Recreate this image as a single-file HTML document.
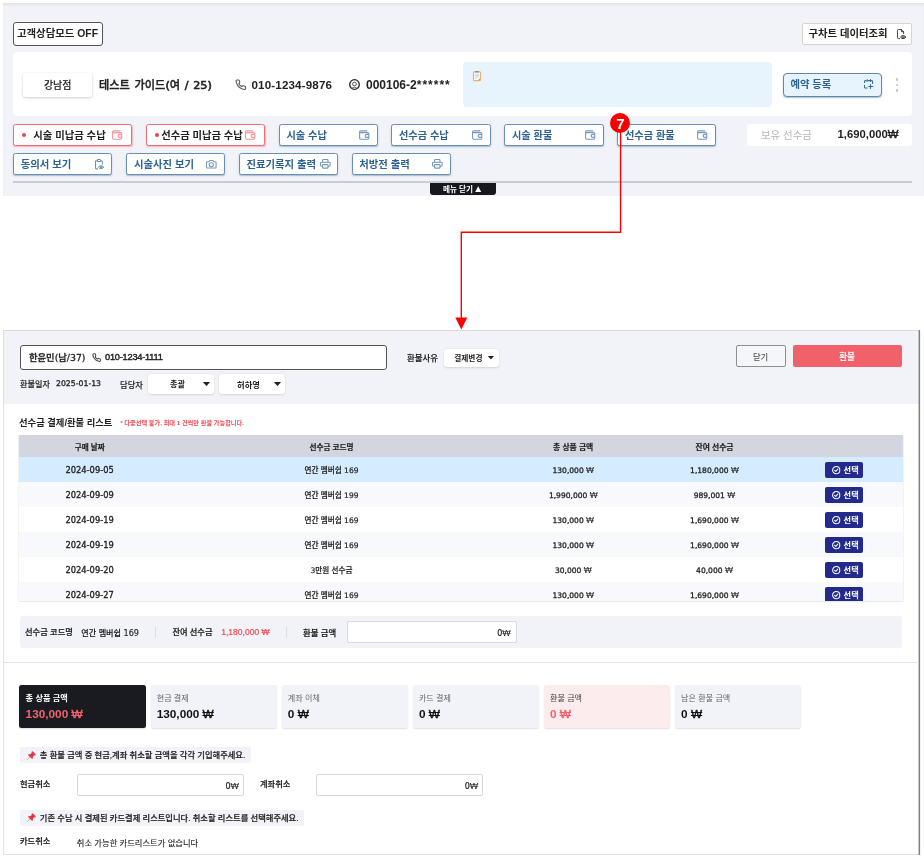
<!DOCTYPE html>
<html lang="ko">
<head>
<meta charset="utf-8">
<title>선수금 환불</title>
<style>
*{box-sizing:border-box;margin:0;padding:0}
html,body{width:924px;height:860px;background:#fff;overflow:hidden}
body{position:relative;font-family:"Liberation Sans","Noto Sans CJK KR",sans-serif;color:#222;font-size:11px;line-height:1}
#page{position:absolute;left:0;top:0;width:924px;height:860px;overflow:hidden;will-change:transform}
.a{position:absolute}
.w{font-family:"Liberation Sans",sans-serif;font-size:1.12em;-webkit-text-stroke:0.05px}
.t{position:absolute;white-space:nowrap;line-height:1;transform:translateY(-50%)}
svg{position:absolute;overflow:visible}
.bb{position:absolute;border-radius:2.5px;background:#fff;border:1px solid #6a90b5;box-shadow:0 1px 1.5px rgba(70,110,150,.45)}
.br{position:absolute;border-radius:2.5px;background:#fff;border:1px solid #ef6f78;box-shadow:0.5px 1px 1.5px rgba(235,100,110,.45)}
.dd{position:absolute;background:#fff;border-radius:3px;box-shadow:0 0.5px 2px rgba(0,0,0,.13)}
.inp{position:absolute;background:#fff;border:1px solid #d9d9d9;border-radius:2px}
.sel{position:absolute;width:38.5px;height:16px;border-radius:2px;background:#232a8c}
.card{position:absolute;width:126.5px;height:43.5px;border-radius:2.5px;background:#f2f3f8;box-shadow:0 1px 1.5px rgba(0,0,0,.12)}
</style>
</head>
<body>
<div id="page">
<div class="a" style="left:3px;top:3px;width:921px;height:192.5px;background:#f2f3f8;box-shadow:inset 0 3px 3px -1px rgba(0,0,0,.07)"></div>
<div class="a" style="left:13px;top:22px;width:89.5px;height:23.5px;border:1px solid #555;border-radius:3px;background:#fff"></div>
<span class="t" style="top:34.4px;font-size:10.4px;color:#222;font-weight:700;left:17px;">고객상담모드 OFF</span>
<div class="a" style="left:802px;top:23px;width:110px;height:21.5px;border:1px solid #d4d4d4;border-radius:2px;background:#fff"></div>
<span class="t" style="top:34.3px;font-size:10.35px;color:#222;font-weight:700;left:808.5px;">구차트 데이터조회</span>
<svg style="left:896.5px;top:29px" width="9" height="10.5" viewBox="0 0 9 10.5" fill="none" stroke="#333" stroke-width="0.9" stroke-linecap="round" stroke-linejoin="round"><path d="M2.6 9.6H1.4A0.9 0.9 0 0 1 0.5 8.7V1.4A0.9 0.9 0 0 1 1.4 0.5H4.4L6.6 2.7V4.6"/><path d="M4.4 0.5V2.7H6.6"/><ellipse cx="6.1" cy="8.1" rx="2.3" ry="1.5" stroke-width="1"/><circle cx="6.1" cy="8.1" r="0.85" fill="#333" stroke="none"/></svg>
<div class="a" style="left:13px;top:52px;width:899px;height:63.5px;background:#fff;border-radius:4px"></div>
<div class="a" style="left:23px;top:73px;width:69px;height:23.5px;background:#fff;border-radius:3px;box-shadow:0 1px 3px rgba(0,0,0,.2)"></div>
<span class="t" style="top:85.8px;font-size:10px;color:#222;font-weight:500;-webkit-text-stroke:0.12px #222;left:-42.3px;width:200px;text-align:center;">강남점</span>
<span class="t" style="top:85.6px;font-size:11.2px;color:#222;font-weight:500;font-family:'DejaVu Sans','Noto Sans CJK KR',sans-serif;-webkit-text-stroke:0.36px #222;left:99px;word-spacing:1.1px;">테스트 가이드<span style="-webkit-text-stroke:0.6px #222">(</span>여<span style="-webkit-text-stroke:0.6px #222"> / 25)</span></span>
<svg style="left:234.6px;top:78.8px" width="11.5" height="11.5" viewBox="0 0 24 24" fill="none" stroke="#5e5e5e" stroke-width="2.4" stroke-linecap="round" stroke-linejoin="round"><path d="M22 16.92v3a2 2 0 0 1-2.18 2 19.79 19.79 0 0 1-8.63-3.07 19.5 19.5 0 0 1-6-6 19.79 19.79 0 0 1-3.07-8.67A2 2 0 0 1 4.11 2h3a2 2 0 0 1 2 1.72 12.84 12.84 0 0 0 .7 2.81 2 2 0 0 1-.45 2.11L8.09 9.91a16 16 0 0 0 6 6l1.27-1.27a2 2 0 0 1 2.11-.45 12.84 12.84 0 0 0 2.81.7A2 2 0 0 1 22 16.92z" transform="translate(0,0)"/></svg>
<span class="t" style="top:84.9px;font-size:11.6px;color:#222;font-weight:700;letter-spacing:0.15px;left:251.5px;">010-1234-9876</span>
<svg style="left:348.9px;top:79px" width="11" height="11" viewBox="0 0 11 11" fill="none" stroke="#222" stroke-width="1.3"><circle cx="5.5" cy="5.5" r="4.8"/><circle cx="5.5" cy="5" r="1.9" stroke="#555" stroke-width="1"/><path d="M3.2 9Q5.5 7.4 7.8 9" stroke="#555" stroke-width="0.9"/></svg>
<span class="t" style="top:84.7px;font-size:12px;color:#222;font-weight:700;left:366px;">000106-2<span style="letter-spacing:1px">******</span></span>
<div class="a" style="left:462.5px;top:62px;width:309.5px;height:44.5px;background:#e7f4fd;border-radius:4px"></div>
<svg style="left:473px;top:70.8px" width="8" height="10.2" viewBox="0 0 8 10.2"><rect x="0.3" y="0.6" width="7.4" height="9.3" rx="1" fill="#efaa62" stroke="#e39a4c" stroke-width="0.4"/><rect x="1.1" y="1.4" width="5.8" height="7.7" fill="#fdfdff"/><rect x="2.3" y="0.1" width="3.4" height="1.5" rx="0.4" fill="#8a8a8a"/><path d="M1.9 3.3H6.1M1.9 4.6H6.1M1.9 5.9H6.1M1.9 7.2H4.6" stroke="#b4b4c0" stroke-width="0.55"/><path d="M6.9 7.3V9.1H5.1Z" fill="#e58a2c"/></svg>
<div class="a" style="left:783px;top:73px;width:98.5px;height:23.5px;background:#e7f4fd;border:1px solid #5f88ae;border-radius:4px;box-shadow:0 1px 1.5px rgba(70,110,150,.45)"></div>
<span class="t" style="top:84.7px;font-size:10.3px;color:#2c6291;font-weight:700;left:790.5px;">예약 등록</span>
<svg style="left:863.8px;top:79.2px" width="9.4" height="10" viewBox="0 0 9.4 10" fill="none" stroke="#356a9a" stroke-width="1.05" stroke-linecap="round"><path d="M2.2 1.6H1.4A0.9 0.9 0 0 0 0.5 2.5V3.4M0.5 6.2V8.2A0.9 0.9 0 0 0 1.4 9.1H3.2M4 1.6H5.6M7.4 1.6H7.7A0.9 0.9 0 0 1 8.6 2.5V4.4"/><path d="M3.1 0.5V2.4M6.5 0.5V2.4"/><path d="M6.6 5.6V9.4M4.7 7.5H8.9"/></svg>
<div class="a" style="left:895.7px;top:77.89999999999999px;width:2.8px;height:2.8px;border-radius:50%;background:#c2c2c2"></div>
<div class="a" style="left:895.7px;top:83.5px;width:2.8px;height:2.8px;border-radius:50%;background:#c2c2c2"></div>
<div class="a" style="left:895.7px;top:89.0px;width:2.8px;height:2.8px;border-radius:50%;background:#c2c2c2"></div>
<div class="br" style="left:13px;top:124px;width:119px;height:21.5px"></div>
<div class="a" style="left:22.2px;top:132.9px;width:4.2px;height:4.2px;border-radius:50%;background:#e8434f"></div>
<span class="t" style="top:135.5px;font-size:10.36px;color:#222;font-weight:700;left:33.2px;">시술 미납금 수납</span>
<svg style="left:112px;top:130.1px" width="10.5" height="9.8" viewBox="0 0 10.5 9.8" fill="none" stroke="#f4979f" stroke-width="1.1" stroke-linejoin="round"><path d="M8.3 0.9H1.7A1.1 1.1 0 0 0 0.6 2V8.1A1.1 1.1 0 0 0 1.7 9.2H8.7A1.1 1.1 0 0 0 9.8 8.1V3.6A1.1 1.1 0 0 0 8.7 2.6H0.8"/><path d="M9.9 4.4H7.7A1.5 1.5 0 0 0 7.7 7.4H9.9" stroke-width="1.2"/></svg>
<div class="br" style="left:146px;top:124px;width:119px;height:21.5px"></div>
<div class="a" style="left:155.1px;top:132.9px;width:4.2px;height:4.2px;border-radius:50%;background:#e8434f"></div>
<span class="t" style="top:135.5px;font-size:10.32px;color:#222;font-weight:700;left:161.2px;">선수금 미납금 수납</span>
<svg style="left:244.6px;top:130.1px" width="10.5" height="9.8" viewBox="0 0 10.5 9.8" fill="none" stroke="#f4979f" stroke-width="1.1" stroke-linejoin="round"><path d="M8.3 0.9H1.7A1.1 1.1 0 0 0 0.6 2V8.1A1.1 1.1 0 0 0 1.7 9.2H8.7A1.1 1.1 0 0 0 9.8 8.1V3.6A1.1 1.1 0 0 0 8.7 2.6H0.8"/><path d="M9.9 4.4H7.7A1.5 1.5 0 0 0 7.7 7.4H9.9" stroke-width="1.2"/></svg>
<div class="bb" style="left:278.5px;top:124px;width:99px;height:21.5px"></div>
<span class="t" style="top:135.5px;font-size:10.2px;color:#2c6291;font-weight:700;left:286.5px;">시술 수납</span>
<svg style="left:359px;top:130.1px" width="10.5" height="9.8" viewBox="0 0 10.5 9.8" fill="none" stroke="#7699bc" stroke-width="1.1" stroke-linejoin="round"><path d="M8.3 0.9H1.7A1.1 1.1 0 0 0 0.6 2V8.1A1.1 1.1 0 0 0 1.7 9.2H8.7A1.1 1.1 0 0 0 9.8 8.1V3.6A1.1 1.1 0 0 0 8.7 2.6H0.8"/><path d="M9.9 4.4H7.7A1.5 1.5 0 0 0 7.7 7.4H9.9" stroke-width="1.2"/></svg>
<div class="bb" style="left:391px;top:124px;width:100px;height:21.5px"></div>
<span class="t" style="top:135.5px;font-size:10.2px;color:#2c6291;font-weight:700;left:399px;">선수금 수납</span>
<svg style="left:472px;top:130.1px" width="10.5" height="9.8" viewBox="0 0 10.5 9.8" fill="none" stroke="#7699bc" stroke-width="1.1" stroke-linejoin="round"><path d="M8.3 0.9H1.7A1.1 1.1 0 0 0 0.6 2V8.1A1.1 1.1 0 0 0 1.7 9.2H8.7A1.1 1.1 0 0 0 9.8 8.1V3.6A1.1 1.1 0 0 0 8.7 2.6H0.8"/><path d="M9.9 4.4H7.7A1.5 1.5 0 0 0 7.7 7.4H9.9" stroke-width="1.2"/></svg>
<div class="bb" style="left:504px;top:124px;width:100px;height:21.5px"></div>
<span class="t" style="top:135.5px;font-size:10.2px;color:#2c6291;font-weight:700;left:512px;">시술 환불</span>
<svg style="left:584.7px;top:130.1px" width="10.5" height="9.8" viewBox="0 0 10.5 9.8" fill="none" stroke="#7699bc" stroke-width="1.1" stroke-linejoin="round"><path d="M8.3 0.9H1.7A1.1 1.1 0 0 0 0.6 2V8.1A1.1 1.1 0 0 0 1.7 9.2H8.7A1.1 1.1 0 0 0 9.8 8.1V3.6A1.1 1.1 0 0 0 8.7 2.6H0.8"/><path d="M9.9 4.4H7.7A1.5 1.5 0 0 0 7.7 7.4H9.9" stroke-width="1.2"/></svg>
<div class="bb" style="left:617px;top:124px;width:99px;height:21.5px"></div>
<span class="t" style="top:135.5px;font-size:10.2px;color:#2c6291;font-weight:700;left:625px;">선수금 환불</span>
<svg style="left:697px;top:130.1px" width="10.5" height="9.8" viewBox="0 0 10.5 9.8" fill="none" stroke="#7699bc" stroke-width="1.1" stroke-linejoin="round"><path d="M8.3 0.9H1.7A1.1 1.1 0 0 0 0.6 2V8.1A1.1 1.1 0 0 0 1.7 9.2H8.7A1.1 1.1 0 0 0 9.8 8.1V3.6A1.1 1.1 0 0 0 8.7 2.6H0.8"/><path d="M9.9 4.4H7.7A1.5 1.5 0 0 0 7.7 7.4H9.9" stroke-width="1.2"/></svg>
<div class="a" style="left:747px;top:124px;width:165px;height:21.5px;background:#fff;border-radius:3px"></div>
<span class="t" style="top:135.9px;font-size:10.45px;color:#b6b6b6;font-weight:400;left:761px;">보유 선수금</span>
<span class="t" style="top:135.4px;font-size:11.3px;color:#222;font-weight:700;left:837.5px;">1,690,000<span style="font-weight:400;-webkit-text-stroke:0.4px">&#8361;</span></span>
<div class="bb" style="left:13px;top:152.5px;width:99px;height:22px"></div>
<span class="t" style="top:164.5px;font-size:10.37px;color:#2c6291;font-weight:700;left:20.7px;">동의서 보기</span>
<div class="bb" style="left:126px;top:152.5px;width:99px;height:22px"></div>
<span class="t" style="top:164.5px;font-size:10.37px;color:#2c6291;font-weight:700;left:134px;">시술사진 보기</span>
<div class="bb" style="left:239px;top:152.5px;width:99px;height:22px"></div>
<span class="t" style="top:164.5px;font-size:10.37px;color:#2c6291;font-weight:700;left:246.5px;">진료기록지 출력</span>
<div class="bb" style="left:351.5px;top:152.5px;width:99px;height:22px"></div>
<span class="t" style="top:164.5px;font-size:10.37px;color:#2c6291;font-weight:700;left:359.2px;">처방전 출력</span>
<svg style="left:94.6px;top:158.7px" width="8.6" height="10.6" viewBox="0 0 8.6 10.6" fill="none" stroke="#6a90b5" stroke-width="1.05" stroke-linecap="round" stroke-linejoin="round"><path d="M2.2 1.7H1.4A0.9 0.9 0 0 0 0.5 2.6V9A0.9 0.9 0 0 0 1.4 9.9H2.6M5.6 1.7H6.4A0.9 0.9 0 0 1 7.3 2.6V5"/><rect x="2.3" y="0.5" width="3.2" height="2" rx="0.7"/><ellipse cx="6" cy="8.2" rx="2.3" ry="1.5" stroke-width="1"/><circle cx="6" cy="8.2" r="0.9" fill="#4f7ca6" stroke="none"/></svg>
<svg style="left:206.1px;top:159.6px" width="10.6" height="8.6" viewBox="0 0 10.6 9" preserveAspectRatio="none" fill="none" stroke="#7699bc" stroke-width="1.1" stroke-linejoin="round"><path d="M1.4 1.9H2.9L3.7 0.6H6.9L7.7 1.9H9.2A0.9 0.9 0 0 1 10.1 2.8V7.5A0.9 0.9 0 0 1 9.2 8.4H1.4A0.9 0.9 0 0 1 0.5 7.5V2.8A0.9 0.9 0 0 1 1.4 1.9Z"/><circle cx="5.3" cy="5" r="2.1"/></svg>
<svg style="left:319.6px;top:159.2px" width="10.6" height="9.6" viewBox="0 0 10.6 9.6" fill="none" stroke="#7699bc" stroke-width="1.1" stroke-linejoin="round"><path d="M2.6 3.2V1.3A0.8 0.8 0 0 1 3.4 0.5H7.2A0.8 0.8 0 0 1 8 1.3V3.2"/><path d="M2.6 7.2H1.4A0.9 0.9 0 0 1 0.5 6.3V4.1A0.9 0.9 0 0 1 1.4 3.2H9.2A0.9 0.9 0 0 1 10.1 4.1V6.3A0.9 0.9 0 0 1 9.2 7.2H8"/><rect x="2.6" y="5.6" width="5.4" height="3.5" rx="0.6"/></svg>
<svg style="left:432px;top:159.2px" width="10.6" height="9.6" viewBox="0 0 10.6 9.6" fill="none" stroke="#7699bc" stroke-width="1.1" stroke-linejoin="round"><path d="M2.6 3.2V1.3A0.8 0.8 0 0 1 3.4 0.5H7.2A0.8 0.8 0 0 1 8 1.3V3.2"/><path d="M2.6 7.2H1.4A0.9 0.9 0 0 1 0.5 6.3V4.1A0.9 0.9 0 0 1 1.4 3.2H9.2A0.9 0.9 0 0 1 10.1 4.1V6.3A0.9 0.9 0 0 1 9.2 7.2H8"/><rect x="2.6" y="5.6" width="5.4" height="3.5" rx="0.6"/></svg>
<div class="a" style="left:13px;top:181px;width:899px;height:1.8px;background:#cbccd1"></div>
<div class="a" style="left:430px;top:182.8px;width:66px;height:12.5px;background:#17181d;border-radius:0 0 3px 3px"></div>
<span class="t" style="top:190.2px;font-size:7.6px;color:#fff;font-weight:700;left:443px;">메뉴 닫기<span style="font-size:10px;line-height:0;position:relative;top:-0.3px;margin-left:0.3px">▲</span></span>
<svg style="left:0;top:0" width="924" height="860" viewBox="0 0 924 860"><path d="M620.6 130V232.3H461.3V320" fill="none" stroke="#f00" stroke-width="1.4"/><path d="M455.3 317.5H467.3L461.3 329.5Z" fill="#f00"/></svg>
<div class="a" style="left:610px;top:113px;width:20.4px;height:20.4px;border-radius:50%;background:#f80000"></div>
<span class="t" style="top:123.4px;font-size:15px;color:#fff;font-weight:700;left:520.3px;width:200px;text-align:center;">7</span>
<div class="a" style="left:3px;top:330px;width:917px;height:525px;background:#fff;border:1px solid #e1e1e1;border-top-color:#dadada;border-right:0"></div>
<div class="a" style="left:4px;top:331px;width:915px;height:72.5px;background:#f2f3f8"></div>
<svg style="left:915px;top:328px" width="9" height="530" viewBox="915 328 9 530"><path d="M919.35 330V855" stroke="#7e7e7e" stroke-width="1.5" fill="none"/></svg>
<div class="a" style="left:20px;top:345px;width:367px;height:24.7px;background:#fff;border:1px solid #555;border-radius:3px"></div>
<span class="t" style="top:357.7px;font-size:9.3px;color:#222;font-weight:500;font-family:'DejaVu Sans','Noto Sans CJK KR',sans-serif;-webkit-text-stroke:0.28px #222;left:29px;">한윤민(남/37)</span>
<svg style="left:91.5px;top:353.2px" width="9.2" height="9.2" viewBox="0 0 24 24" fill="none" stroke="#4a4a4a" stroke-width="2.7" stroke-linecap="round" stroke-linejoin="round"><path d="M22 16.92v3a2 2 0 0 1-2.18 2 19.79 19.79 0 0 1-8.63-3.07 19.5 19.5 0 0 1-6-6 19.79 19.79 0 0 1-3.07-8.67A2 2 0 0 1 4.11 2h3a2 2 0 0 1 2 1.72 12.84 12.84 0 0 0 .7 2.81 2 2 0 0 1-.45 2.11L8.09 9.91a16 16 0 0 0 6 6l1.27-1.27a2 2 0 0 1 2.11-.45 12.84 12.84 0 0 0 2.81.7A2 2 0 0 1 22 16.92z"/></svg>
<span class="t" style="top:357.9px;font-size:9.2px;color:#222;font-weight:400;-webkit-text-stroke:0.42px #222;letter-spacing:-0.2px;left:105px;">010-1234-1111</span>
<span class="t" style="top:358px;font-size:8.45px;color:#222;font-weight:500;-webkit-text-stroke:0.15px #222;left:407px;">환불사유</span>
<div class="dd" style="left:443.8px;top:348.6px;width:55.5px;height:18.7px"></div>
<span class="t" style="top:358.5px;font-size:7.7px;color:#222;font-weight:700;left:454.2px;">결제변경</span>
<svg style="left:488.2px;top:356.2px" width="5.8" height="3.2" viewBox="0 0 5.8 3.2"><path d="M0.4 0H5.4Q5.9 0.1 5.6 0.5L3.3 3Q2.9 3.3 2.5 3L0.2 0.5Q-0.1 0.1 0.4 0Z" fill="#222"/></svg>
<div class="a" style="left:735.7px;top:345.2px;width:50.5px;height:22px;background:#f5f6fa;border:1px solid #8f8f8f;border-radius:2px"></div>
<span class="t" style="top:356.6px;font-size:8.3px;color:#555;font-weight:500;left:660.6px;width:200px;text-align:center;">닫기</span>
<div class="a" style="left:792.9px;top:345.2px;width:109px;height:21.7px;background:#f0616a;border-radius:2px"></div>
<span class="t" style="top:356.6px;font-size:8.6px;color:#fff;font-weight:700;left:747.1px;width:200px;text-align:center;">환불</span>
<span class="t" style="top:384.5px;font-size:8.15px;color:#222;font-weight:500;-webkit-text-stroke:0.12px #222;left:20px;">환불일자</span>
<span class="t" style="top:384.4px;font-size:7.75px;color:#222;font-weight:400;font-family:'DejaVu Sans','Noto Sans CJK KR',sans-serif;-webkit-text-stroke:0.32px #222;left:56px;">2025-01-13</span>
<span class="t" style="top:384.5px;font-size:8.3px;color:#222;font-weight:500;-webkit-text-stroke:0.12px #222;left:120px;">담당자</span>
<div class="dd" style="left:147.6px;top:374.3px;width:66.4px;height:19.4px"></div>
<span class="t" style="top:384.8px;font-size:8.1px;color:#222;font-weight:700;left:170px;">총괄</span>
<svg style="left:202.6px;top:381.9px" width="7" height="3.8" viewBox="0 0 5.8 3.2"><path d="M0.4 0H5.4Q5.9 0.1 5.6 0.5L3.3 3Q2.9 3.3 2.5 3L0.2 0.5Q-0.1 0.1 0.4 0Z" fill="#222"/></svg>
<div class="dd" style="left:218.7px;top:374.3px;width:66.6px;height:19.4px"></div>
<span class="t" style="top:384.8px;font-size:8.3px;color:#222;font-weight:700;left:237px;">허하영</span>
<svg style="left:273.6px;top:381.9px" width="7" height="3.8" viewBox="0 0 5.8 3.2"><path d="M0.4 0H5.4Q5.9 0.1 5.6 0.5L3.3 3Q2.9 3.3 2.5 3L0.2 0.5Q-0.1 0.1 0.4 0Z" fill="#222"/></svg>
<span class="t" style="top:424.2px;font-size:9.32px;color:#222;font-weight:700;left:19px;">선수금 결제/환불 리스트</span>
<span class="t" style="top:423.4px;font-size:6.2px;color:#f04a55;font-weight:700;left:120.2px;">* 다중선택 불가, 최대 1 건씩만 환불 가능합니다.</span>
<div class="a" style="left:19px;top:435px;width:884.3px;height:166px;background:#fff;box-shadow:0 0.5px 1.5px rgba(0,0,0,.22);overflow:hidden"></div>
<div class="a" style="left:19px;top:435px;width:884.3px;height:22px;background:#d4d6df"></div>
<span class="t" style="top:447.7px;font-size:7.6px;color:#222;font-weight:700;-webkit-text-stroke:0.15px #222;left:-10.299999999999997px;width:200px;text-align:center;">구매 날짜</span>
<span class="t" style="top:447.7px;font-size:7.6px;color:#222;font-weight:700;-webkit-text-stroke:0.15px #222;left:231.5px;width:200px;text-align:center;">선수금 코드명</span>
<span class="t" style="top:447.7px;font-size:7.8px;color:#222;font-weight:700;-webkit-text-stroke:0.15px #222;left:473.20000000000005px;width:200px;text-align:center;">총 상품 금액</span>
<span class="t" style="top:447.7px;font-size:7.8px;color:#222;font-weight:700;-webkit-text-stroke:0.15px #222;left:614.5px;width:200px;text-align:center;">잔여 선수금</span>
<div class="a" style="left:19px;top:457px;width:884.3px;height:144px;overflow:hidden">
<div class="a" style="left:0;top:0.20px;width:884.3px;height:25.2px;background:#d5ebff">
<span class="t" style="left:-29.4px;width:200px;text-align:center;top:13.0px;font-size:8.3px;color:#222;font-weight:400;font-family:'DejaVu Sans','Noto Sans CJK KR',sans-serif;-webkit-text-stroke:0.3px #222">2024-09-05</span>
<span class="t" style="left:212.5px;width:200px;text-align:center;top:13.4px;font-size:7.57px;color:#222;font-weight:500;font-family:'DejaVu Sans','Noto Sans CJK KR',sans-serif;-webkit-text-stroke:0.18px #222">연간 멤버쉽 169</span>
<span class="t" style="left:454.3px;width:200px;text-align:center;top:12.4px;font-size:7.55px;color:#222;font-weight:400;font-family:'DejaVu Sans','Noto Sans CJK KR',sans-serif;-webkit-text-stroke:0.3px #222">130,000 <span class="w">&#8361;</span></span>
<span class="t" style="left:595.5px;width:200px;text-align:center;top:12.4px;font-size:7.55px;color:#222;font-weight:400;font-family:'DejaVu Sans','Noto Sans CJK KR',sans-serif;-webkit-text-stroke:0.3px #222">1,180,000 <span class="w">&#8361;</span></span>
<div class="sel" style="left:805.8px;top:5px"><svg style="left:6.8px;top:3.8px" width="8.4" height="8.4" viewBox="0 0 8.4 8.4" fill="none" stroke="#fff" stroke-width="1.05" stroke-linecap="round" stroke-linejoin="round"><circle cx="4.2" cy="4.2" r="3.6"/><path d="M2.6 4.3L3.8 5.4L5.8 3.1"/></svg><span class="t" style="left:18.8px;top:9.2px;font-size:8.2px;color:#fff;font-weight:700">선택</span></div>
</div>
<div class="a" style="left:0;top:25.20px;width:884.3px;height:25.2px;background:#f8f9fc">
<span class="t" style="left:-29.4px;width:200px;text-align:center;top:13.0px;font-size:8.3px;color:#222;font-weight:400;font-family:'DejaVu Sans','Noto Sans CJK KR',sans-serif;-webkit-text-stroke:0.3px #222">2024-09-09</span>
<span class="t" style="left:212.5px;width:200px;text-align:center;top:13.4px;font-size:7.57px;color:#222;font-weight:500;font-family:'DejaVu Sans','Noto Sans CJK KR',sans-serif;-webkit-text-stroke:0.18px #222">연간 멤버쉽 199</span>
<span class="t" style="left:454.3px;width:200px;text-align:center;top:12.4px;font-size:7.55px;color:#222;font-weight:400;font-family:'DejaVu Sans','Noto Sans CJK KR',sans-serif;-webkit-text-stroke:0.3px #222">1,990,000 <span class="w">&#8361;</span></span>
<span class="t" style="left:595.5px;width:200px;text-align:center;top:12.4px;font-size:7.55px;color:#222;font-weight:400;font-family:'DejaVu Sans','Noto Sans CJK KR',sans-serif;-webkit-text-stroke:0.3px #222">989,001 <span class="w">&#8361;</span></span>
<div class="sel" style="left:805.8px;top:5px"><svg style="left:6.8px;top:3.8px" width="8.4" height="8.4" viewBox="0 0 8.4 8.4" fill="none" stroke="#fff" stroke-width="1.05" stroke-linecap="round" stroke-linejoin="round"><circle cx="4.2" cy="4.2" r="3.6"/><path d="M2.6 4.3L3.8 5.4L5.8 3.1"/></svg><span class="t" style="left:18.8px;top:9.2px;font-size:8.2px;color:#fff;font-weight:700">선택</span></div>
</div>
<div class="a" style="left:0;top:50.20px;width:884.3px;height:25.2px;background:#fff">
<span class="t" style="left:-29.4px;width:200px;text-align:center;top:13.0px;font-size:8.3px;color:#222;font-weight:400;font-family:'DejaVu Sans','Noto Sans CJK KR',sans-serif;-webkit-text-stroke:0.3px #222">2024-09-19</span>
<span class="t" style="left:212.5px;width:200px;text-align:center;top:13.4px;font-size:7.57px;color:#222;font-weight:500;font-family:'DejaVu Sans','Noto Sans CJK KR',sans-serif;-webkit-text-stroke:0.18px #222">연간 멤버쉽 169</span>
<span class="t" style="left:454.3px;width:200px;text-align:center;top:12.4px;font-size:7.55px;color:#222;font-weight:400;font-family:'DejaVu Sans','Noto Sans CJK KR',sans-serif;-webkit-text-stroke:0.3px #222">130,000 <span class="w">&#8361;</span></span>
<span class="t" style="left:595.5px;width:200px;text-align:center;top:12.4px;font-size:7.55px;color:#222;font-weight:400;font-family:'DejaVu Sans','Noto Sans CJK KR',sans-serif;-webkit-text-stroke:0.3px #222">1,690,000 <span class="w">&#8361;</span></span>
<div class="sel" style="left:805.8px;top:5px"><svg style="left:6.8px;top:3.8px" width="8.4" height="8.4" viewBox="0 0 8.4 8.4" fill="none" stroke="#fff" stroke-width="1.05" stroke-linecap="round" stroke-linejoin="round"><circle cx="4.2" cy="4.2" r="3.6"/><path d="M2.6 4.3L3.8 5.4L5.8 3.1"/></svg><span class="t" style="left:18.8px;top:9.2px;font-size:8.2px;color:#fff;font-weight:700">선택</span></div>
</div>
<div class="a" style="left:0;top:75.20px;width:884.3px;height:25.2px;background:#f8f9fc">
<span class="t" style="left:-29.4px;width:200px;text-align:center;top:13.0px;font-size:8.3px;color:#222;font-weight:400;font-family:'DejaVu Sans','Noto Sans CJK KR',sans-serif;-webkit-text-stroke:0.3px #222">2024-09-19</span>
<span class="t" style="left:212.5px;width:200px;text-align:center;top:13.4px;font-size:7.57px;color:#222;font-weight:500;font-family:'DejaVu Sans','Noto Sans CJK KR',sans-serif;-webkit-text-stroke:0.18px #222">연간 멤버쉽 169</span>
<span class="t" style="left:454.3px;width:200px;text-align:center;top:12.4px;font-size:7.55px;color:#222;font-weight:400;font-family:'DejaVu Sans','Noto Sans CJK KR',sans-serif;-webkit-text-stroke:0.3px #222">130,000 <span class="w">&#8361;</span></span>
<span class="t" style="left:595.5px;width:200px;text-align:center;top:12.4px;font-size:7.55px;color:#222;font-weight:400;font-family:'DejaVu Sans','Noto Sans CJK KR',sans-serif;-webkit-text-stroke:0.3px #222">1,690,000 <span class="w">&#8361;</span></span>
<div class="sel" style="left:805.8px;top:5px"><svg style="left:6.8px;top:3.8px" width="8.4" height="8.4" viewBox="0 0 8.4 8.4" fill="none" stroke="#fff" stroke-width="1.05" stroke-linecap="round" stroke-linejoin="round"><circle cx="4.2" cy="4.2" r="3.6"/><path d="M2.6 4.3L3.8 5.4L5.8 3.1"/></svg><span class="t" style="left:18.8px;top:9.2px;font-size:8.2px;color:#fff;font-weight:700">선택</span></div>
</div>
<div class="a" style="left:0;top:100.20px;width:884.3px;height:25.2px;background:#fff">
<span class="t" style="left:-29.4px;width:200px;text-align:center;top:13.0px;font-size:8.3px;color:#222;font-weight:400;font-family:'DejaVu Sans','Noto Sans CJK KR',sans-serif;-webkit-text-stroke:0.3px #222">2024-09-20</span>
<span class="t" style="left:212.5px;width:200px;text-align:center;top:13.4px;font-size:7.57px;color:#222;font-weight:500;font-family:'DejaVu Sans','Noto Sans CJK KR',sans-serif;-webkit-text-stroke:0.18px #222">3만원 선수금</span>
<span class="t" style="left:454.3px;width:200px;text-align:center;top:12.4px;font-size:7.55px;color:#222;font-weight:400;font-family:'DejaVu Sans','Noto Sans CJK KR',sans-serif;-webkit-text-stroke:0.3px #222">30,000 <span class="w">&#8361;</span></span>
<span class="t" style="left:595.5px;width:200px;text-align:center;top:12.4px;font-size:7.55px;color:#222;font-weight:400;font-family:'DejaVu Sans','Noto Sans CJK KR',sans-serif;-webkit-text-stroke:0.3px #222">40,000 <span class="w">&#8361;</span></span>
<div class="sel" style="left:805.8px;top:5px"><svg style="left:6.8px;top:3.8px" width="8.4" height="8.4" viewBox="0 0 8.4 8.4" fill="none" stroke="#fff" stroke-width="1.05" stroke-linecap="round" stroke-linejoin="round"><circle cx="4.2" cy="4.2" r="3.6"/><path d="M2.6 4.3L3.8 5.4L5.8 3.1"/></svg><span class="t" style="left:18.8px;top:9.2px;font-size:8.2px;color:#fff;font-weight:700">선택</span></div>
</div>
<div class="a" style="left:0;top:125.20px;width:884.3px;height:25.2px;background:#f8f9fc">
<span class="t" style="left:-29.4px;width:200px;text-align:center;top:13.0px;font-size:8.3px;color:#222;font-weight:400;font-family:'DejaVu Sans','Noto Sans CJK KR',sans-serif;-webkit-text-stroke:0.3px #222">2024-09-27</span>
<span class="t" style="left:212.5px;width:200px;text-align:center;top:13.4px;font-size:7.57px;color:#222;font-weight:500;font-family:'DejaVu Sans','Noto Sans CJK KR',sans-serif;-webkit-text-stroke:0.18px #222">연간 멤버쉽 169</span>
<span class="t" style="left:454.3px;width:200px;text-align:center;top:12.4px;font-size:7.55px;color:#222;font-weight:400;font-family:'DejaVu Sans','Noto Sans CJK KR',sans-serif;-webkit-text-stroke:0.3px #222">130,000 <span class="w">&#8361;</span></span>
<span class="t" style="left:595.5px;width:200px;text-align:center;top:12.4px;font-size:7.55px;color:#222;font-weight:400;font-family:'DejaVu Sans','Noto Sans CJK KR',sans-serif;-webkit-text-stroke:0.3px #222">1,690,000 <span class="w">&#8361;</span></span>
<div class="sel" style="left:805.8px;top:5px"><svg style="left:6.8px;top:3.8px" width="8.4" height="8.4" viewBox="0 0 8.4 8.4" fill="none" stroke="#fff" stroke-width="1.05" stroke-linecap="round" stroke-linejoin="round"><circle cx="4.2" cy="4.2" r="3.6"/><path d="M2.6 4.3L3.8 5.4L5.8 3.1"/></svg><span class="t" style="left:18.8px;top:9.2px;font-size:8.2px;color:#fff;font-weight:700">선택</span></div>
</div>
</div>
<div class="a" style="left:19.5px;top:615.5px;width:882.5px;height:32.5px;background:#f2f3f8;border-radius:3px"></div>
<span class="t" style="top:632.6px;font-size:8.26px;color:#222;font-weight:500;-webkit-text-stroke:0.22px #222;left:25px;">선수금 코드명</span>
<span class="t" style="top:632.5px;font-size:8.1px;color:#222;font-weight:500;font-family:'DejaVu Sans','Noto Sans CJK KR',sans-serif;-webkit-text-stroke:0.15px #222;left:81.2px;">연간 멤버쉽 169</span>
<div class="a" style="left:155.3px;top:626.5px;width:1px;height:11px;background:#dcdde3"></div>
<span class="t" style="top:632.6px;font-size:8.2px;color:#222;font-weight:500;-webkit-text-stroke:0.22px #222;left:172.5px;">잔여 선수금</span>
<span class="t" style="top:632.3px;font-size:8.55px;color:#ee4b55;font-weight:400;-webkit-text-stroke:0.2px #ee4b55;left:221.2px;">1,180,000 &#8361;</span>
<div class="a" style="left:286.3px;top:626.5px;width:1px;height:11px;background:#dcdde3"></div>
<span class="t" style="top:632.6px;font-size:8.4px;color:#222;font-weight:500;-webkit-text-stroke:0.22px #222;left:303px;">환불 금액</span>
<div class="inp" style="left:347px;top:621px;width:170px;height:22px"></div>
<span class="t" style="top:632.7px;font-size:8px;color:#222;font-weight:400;font-family:'DejaVu Sans','Noto Sans CJK KR',sans-serif;-webkit-text-stroke:0.2px #222;right:413.2px;">0<span class="w">&#8361;</span></span>
<div class="a" style="left:4px;top:662px;width:915px;height:1px;background:#e4e4e4"></div>
<div class="card" style="left:19.4px;top:684.8px;background:#1a1b20"></div>
<span class="t" style="top:699.2px;font-size:8.2px;color:#fff;font-weight:700;left:25.6px;">총 상품 금액</span>
<span class="t" style="top:715px;font-size:11.8px;color:#f0626c;font-weight:700;left:25.6px;">130,000 <span style="font-weight:400;-webkit-text-stroke:0.4px">&#8361;</span></span>
<div class="card" style="left:150.5px;top:684.8px;background:#f2f3f8"></div>
<span class="t" style="top:699.2px;font-size:8.1px;color:#666;font-weight:400;left:156.7px;">현금 결제</span>
<span class="t" style="top:715px;font-size:11.8px;color:#111;font-weight:700;left:156.7px;">130,000 <span style="font-weight:400;-webkit-text-stroke:0.4px">&#8361;</span></span>
<div class="card" style="left:281.6px;top:684.8px;background:#f2f3f8"></div>
<span class="t" style="top:699.2px;font-size:8.1px;color:#666;font-weight:400;left:287.8px;">계좌 이체</span>
<span class="t" style="top:715px;font-size:11.8px;color:#111;font-weight:700;left:287.8px;">0 <span style="font-weight:400;-webkit-text-stroke:0.4px">&#8361;</span></span>
<div class="card" style="left:412.7px;top:684.8px;background:#f2f3f8"></div>
<span class="t" style="top:699.2px;font-size:8.1px;color:#666;font-weight:400;left:418.9px;">카드 결제</span>
<span class="t" style="top:715px;font-size:11.8px;color:#111;font-weight:700;left:418.9px;">0 <span style="font-weight:400;-webkit-text-stroke:0.4px">&#8361;</span></span>
<div class="card" style="left:543.8px;top:684.8px;background:#fdeced"></div>
<span class="t" style="top:699.2px;font-size:8.1px;color:#444;font-weight:400;left:550.0px;">환불 금액</span>
<span class="t" style="top:715px;font-size:11.8px;color:#f0626c;font-weight:700;left:550.0px;">0 <span style="font-weight:400;-webkit-text-stroke:0.4px">&#8361;</span></span>
<div class="card" style="left:674.9px;top:684.8px;background:#f2f3f8"></div>
<span class="t" style="top:699.2px;font-size:8.1px;color:#666;font-weight:400;left:681.1px;">남은 환불 금액</span>
<span class="t" style="top:715px;font-size:11.8px;color:#111;font-weight:700;left:681.1px;">0 <span style="font-weight:400;-webkit-text-stroke:0.4px">&#8361;</span></span>
<div class="a" style="left:20px;top:747.4px;width:231px;height:15.5px;background:#f2f3f8;border-radius:2px"></div>
<svg style="left:25.5px;top:751.7px" width="9" height="9" viewBox="-4.5 -4.5 9 9"><g transform="translate(0.6,-0.6) rotate(45)"><path d="M0 1.4V5.2" stroke="#a9a9a9" stroke-width="0.7" stroke-linecap="round"/><rect x="-2.6" y="-4.4" width="5.2" height="1.7" rx="0.8" fill="#ea3a40"/><path d="M-1.5 -3H1.5L2 0.2H-2Z" fill="#d72f4b"/><rect x="-3" y="-0.2" width="6" height="1.8" rx="0.8" fill="#ea3a40"/></g></svg>
<span class="t" style="top:756.3px;font-size:8.28px;color:#222;font-weight:500;-webkit-text-stroke:0.2px #222;left:39.8px;">총 환불 금액 중 현금,계좌 취소할 금액을 각각 기입해주세요.</span>
<span class="t" style="top:785.4px;font-size:8.25px;color:#222;font-weight:500;-webkit-text-stroke:0.2px #222;left:20px;">현금취소</span>
<div class="inp" style="left:77px;top:774px;width:167px;height:22px"></div>
<span class="t" style="top:785.6px;font-size:8px;color:#222;font-weight:400;font-family:'DejaVu Sans','Noto Sans CJK KR',sans-serif;-webkit-text-stroke:0.2px #222;right:685px;">0<span class="w">&#8361;</span></span>
<span class="t" style="top:785.4px;font-size:8.25px;color:#222;font-weight:500;-webkit-text-stroke:0.2px #222;left:260px;">계좌취소</span>
<div class="inp" style="left:316px;top:774px;width:167px;height:22px"></div>
<span class="t" style="top:785.6px;font-size:8px;color:#222;font-weight:400;font-family:'DejaVu Sans','Noto Sans CJK KR',sans-serif;-webkit-text-stroke:0.2px #222;right:445.8px;">0<span class="w">&#8361;</span></span>
<div class="a" style="left:20px;top:809.8px;width:283.7px;height:15.8px;background:#f2f3f8;border-radius:2px"></div>
<svg style="left:25.5px;top:814.3000000000001px" width="9" height="9" viewBox="-4.5 -4.5 9 9"><g transform="translate(0.6,-0.6) rotate(45)"><path d="M0 1.4V5.2" stroke="#a9a9a9" stroke-width="0.7" stroke-linecap="round"/><rect x="-2.6" y="-4.4" width="5.2" height="1.7" rx="0.8" fill="#ea3a40"/><path d="M-1.5 -3H1.5L2 0.2H-2Z" fill="#d72f4b"/><rect x="-3" y="-0.2" width="6" height="1.8" rx="0.8" fill="#ea3a40"/></g></svg>
<span class="t" style="top:819px;font-size:8.27px;color:#222;font-weight:500;-webkit-text-stroke:0.2px #222;left:39.8px;">기존 수납 시 결제된 카드결제 리스트입니다. 취소할 리스트를 선택해주세요.</span>
<span class="t" style="top:842.4px;font-size:8.25px;color:#222;font-weight:500;-webkit-text-stroke:0.2px #222;left:20px;">카드취소</span>
<span class="t" style="top:842.6px;font-size:8.3px;color:#222;font-weight:400;-webkit-text-stroke:0.12px #222;left:76.8px;">취소 가능한 카드리스트가 없습니다</span>
</div>
</body>
</html>
